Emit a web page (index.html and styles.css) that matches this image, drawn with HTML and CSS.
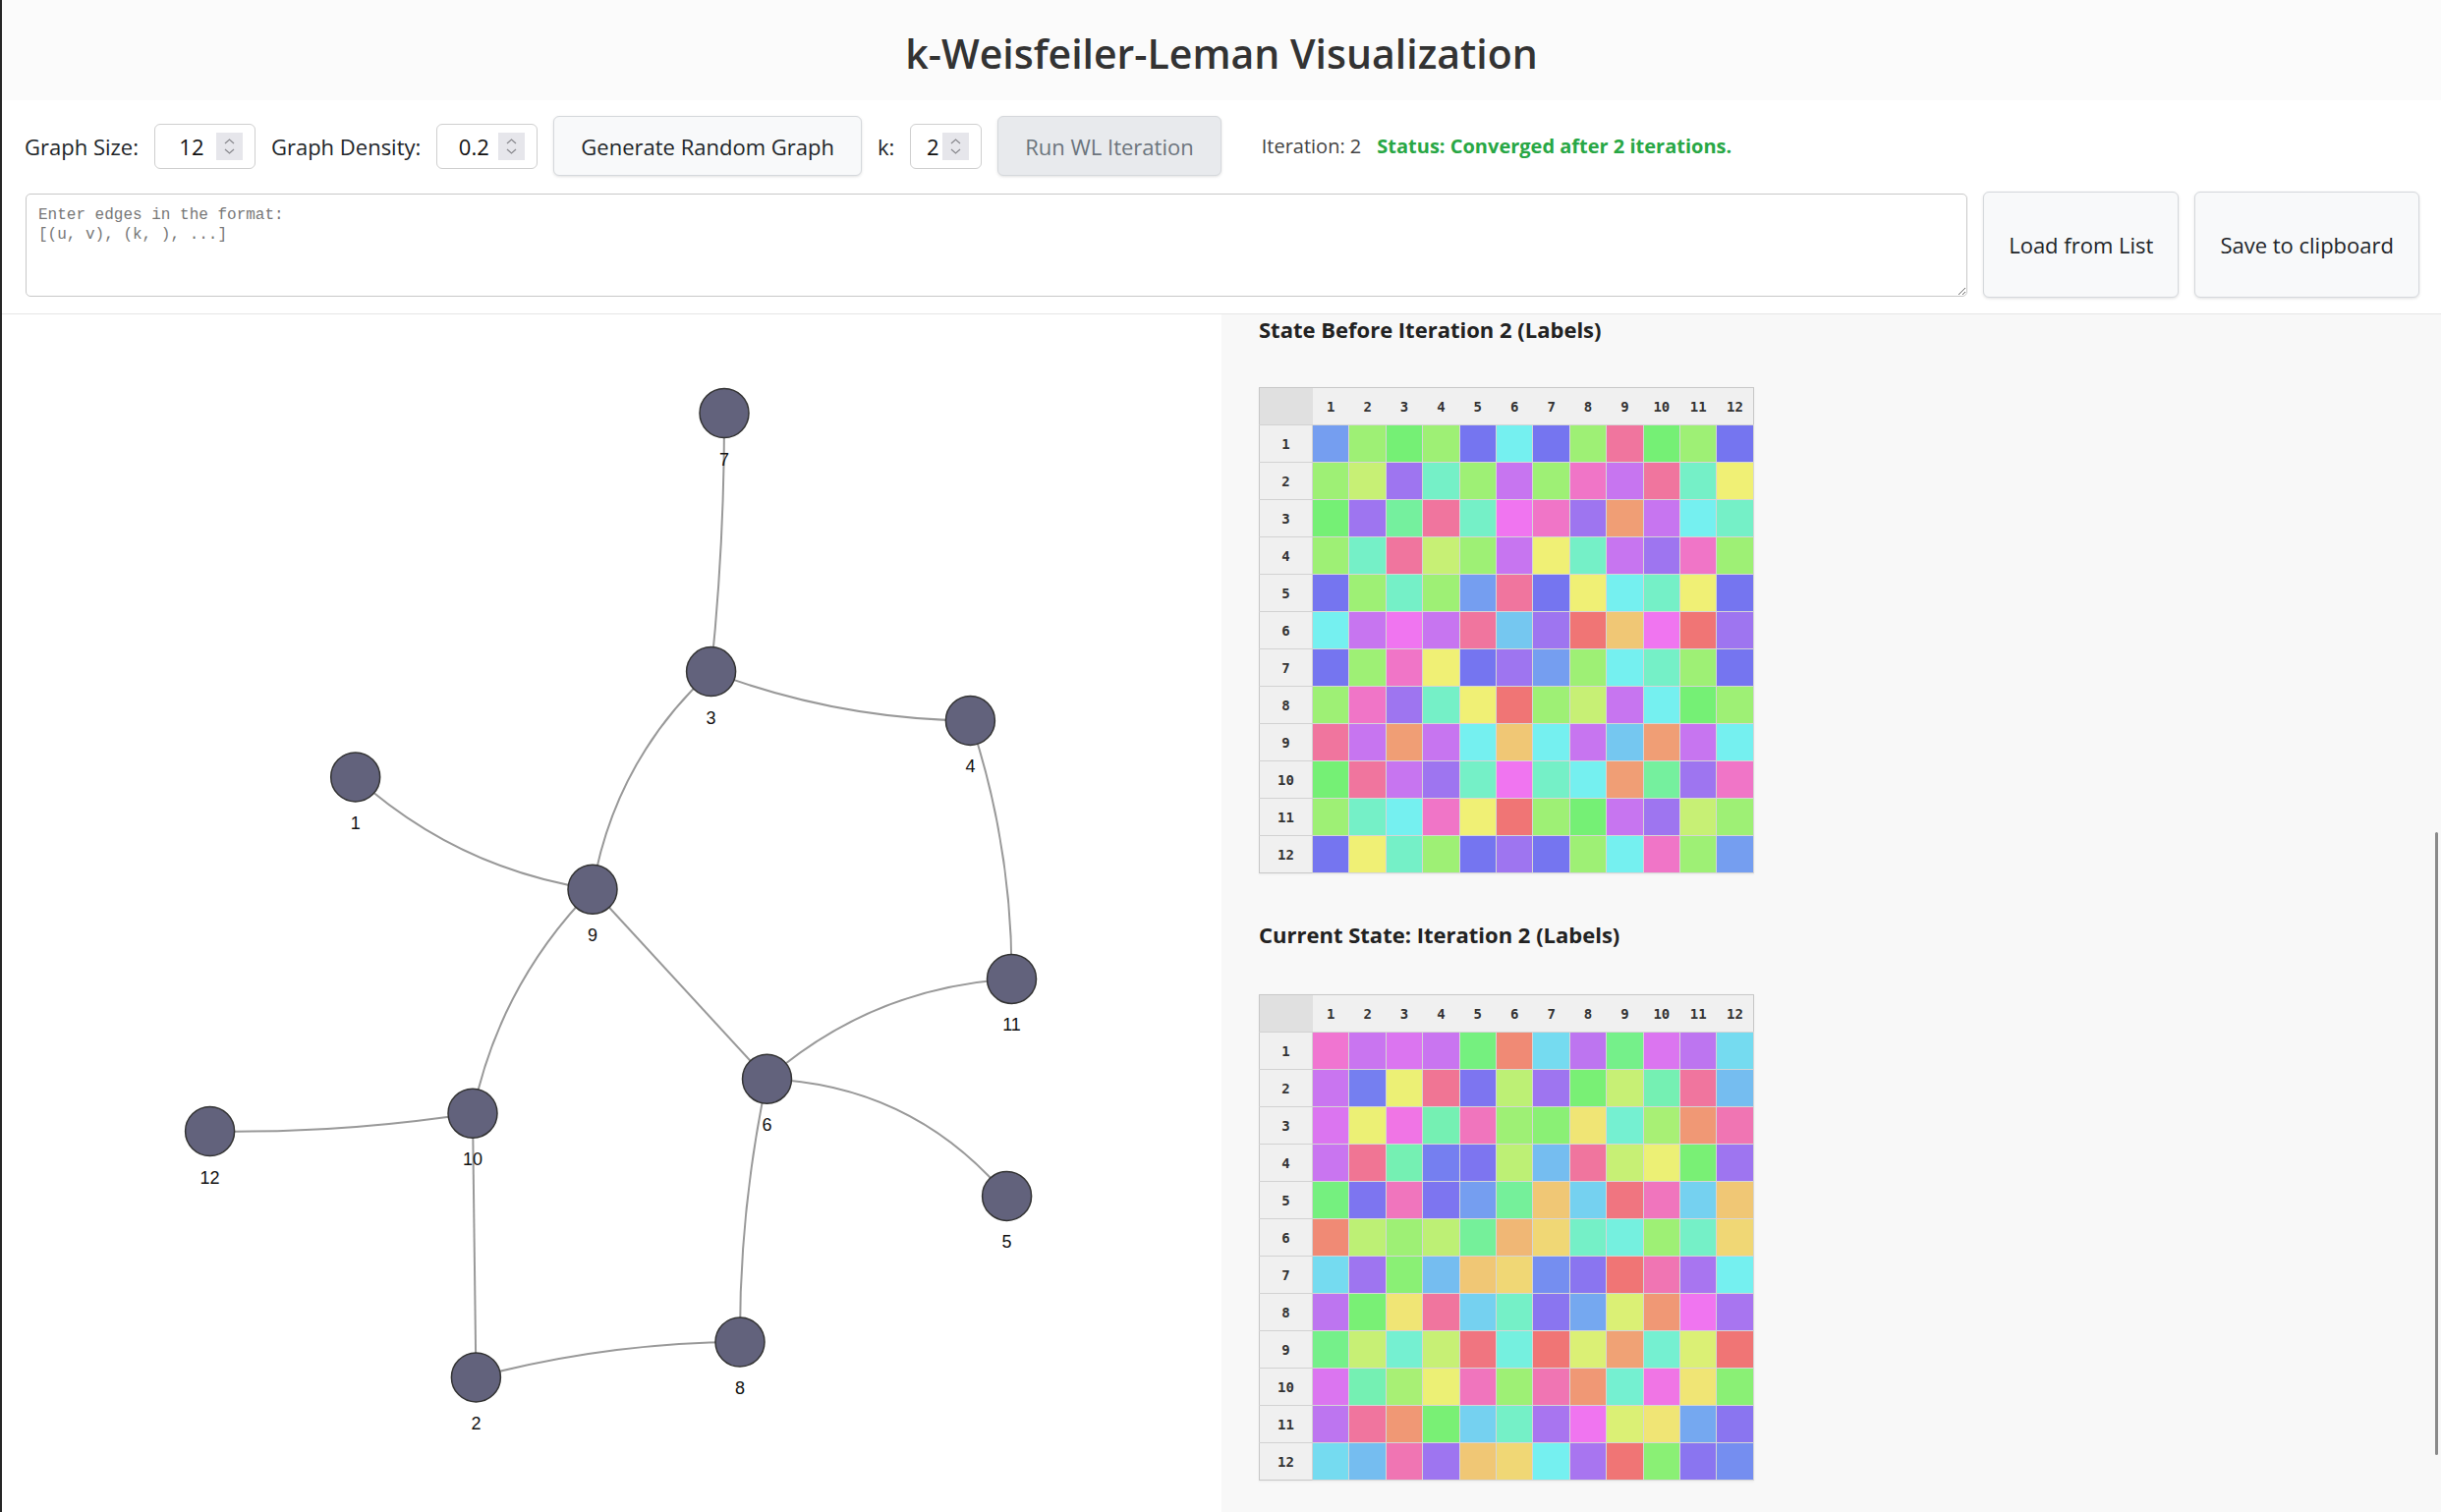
FILE: index.html
```html
<!DOCTYPE html>
<html lang="en">
<head>
<meta charset="utf-8">
<title>k-Weisfeiler-Leman Visualization</title>
<link rel="stylesheet" href="styles.css">
</head>
<body>
<header class="title-bar">
  <h1>k-Weisfeiler-Leman Visualization</h1>
</header>

<section class="controls">
  <div class="toolbar">
    <label class="field-label" for="size">Graph Size:</label>
    <div class="number-field wide">
      <input id="size" class="num-input" value="12">
      <span class="spinner"><svg width="27" height="28" viewBox="0 0 27 28"><polyline points="9,11 13.5,7 18,11"/><polyline points="9,17 13.5,21 18,17"/></svg></span>
    </div>
    <label class="field-label" for="density">Graph Density:</label>
    <div class="number-field wide">
      <input id="density" class="num-input" value="0.2">
      <span class="spinner"><svg width="27" height="28" viewBox="0 0 27 28"><polyline points="9,11 13.5,7 18,11"/><polyline points="9,17 13.5,21 18,17"/></svg></span>
    </div>
    <button class="btn">Generate Random Graph</button>
    <label class="field-label" for="k">k:</label>
    <div class="number-field narrow">
      <input id="k" class="num-input" value="2">
      <span class="spinner"><svg width="27" height="28" viewBox="0 0 27 28"><polyline points="9,11 13.5,7 18,11"/><polyline points="9,17 13.5,21 18,17"/></svg></span>
    </div>
    <button class="btn btn-disabled" disabled>Run WL Iteration</button>
    <div class="status">
      <span class="iter">Iteration: 2</span>
      <span class="converged">Status: Converged after 2 iterations.</span>
    </div>
  </div>
  <div class="edge-row">
    <textarea class="edge-input" placeholder="Enter edges in the format:&#10;[(u, v), (k, ), ...]"></textarea>
    <button class="btn btn-tall">Load from List</button>
    <button class="btn btn-tall">Save to clipboard</button>
  </div>
</section>

<main class="workspace">
  <div class="graph-panel">
    <svg class="graph" width="1241" height="1219" viewBox="0 0 1241 1219">
      <g class="edges">
        <path d="M735,100.5 Q735.3,232 721.6,363.6"/>
        <path d="M721.6,363.6 Q848.5,412 985.4,413.4"/>
        <path d="M721.6,363.6 Q623.5,453.9 601,585.2"/>
        <path d="M359.7,470.9 Q463.3,564.2 601,585.2"/>
        <path d="M601,585.2 Q506.5,681.3 479,813.2"/>
        <path d="M601,585.2 L778.5,778.2"/>
        <path d="M778.5,778.2 Q885.6,684.7 1027.5,676.4"/>
        <path d="M778.5,778.2 Q926.8,783.9 1022.6,897.4"/>
        <path d="M778.5,778.2 Q750.3,910.6 751,1046"/>
        <path d="M479,813.2 Q346,833.6 211.6,831.5"/>
        <path d="M479,813.2 L482.4,1081.9"/>
        <path d="M482.4,1081.9 Q614.4,1046.7 751,1046"/>
        <path d="M985.4,413.4 Q1028.2,541.4 1027.5,676.4"/>
      </g>
      <g class="nodes">
        <circle cx="359.7" cy="470.9" r="25"/>
        <circle cx="482.4" cy="1081.9" r="25"/>
        <circle cx="721.6" cy="363.6" r="25"/>
        <circle cx="985.4" cy="413.4" r="25"/>
        <circle cx="1022.6" cy="897.4" r="25"/>
        <circle cx="778.5" cy="778.2" r="25"/>
        <circle cx="735" cy="100.5" r="25"/>
        <circle cx="751" cy="1046" r="25"/>
        <circle cx="601" cy="585.2" r="25"/>
        <circle cx="479" cy="813.2" r="25"/>
        <circle cx="1027.5" cy="676.4" r="25"/>
        <circle cx="211.6" cy="831.5" r="25"/>
      </g>
      <g class="labels">
        <text x="359.7" y="523.9">1</text>
        <text x="482.4" y="1134.9">2</text>
        <text x="721.6" y="416.6">3</text>
        <text x="985.4" y="466.4">4</text>
        <text x="1022.6" y="950.4">5</text>
        <text x="778.5" y="831.2">6</text>
        <text x="735" y="153.5">7</text>
        <text x="751" y="1099">8</text>
        <text x="601" y="638.2">9</text>
        <text x="479" y="866.2">10</text>
        <text x="1027.5" y="729.4">11</text>
        <text x="211.6" y="884.5">12</text>
      </g>
    </svg>
  </div>

  <div class="state-panel">
    <h3>State Before Iteration 2 (Labels)</h3>
    <table class="state-table">
      <colgroup><col class="row-head-col"><col span="12"></colgroup>
      <thead>
        <tr><th class="corner"></th><th>1</th><th>2</th><th>3</th><th>4</th><th>5</th><th>6</th><th>7</th><th>8</th><th>9</th><th>10</th><th>11</th><th>12</th></tr>
      </thead>
      <tbody>
        <tr><th>1</th><td class="h220"></td><td class="h100"></td><td class="h120"></td><td class="h100"></td><td class="h240"></td><td class="h180"></td><td class="h240"></td><td class="h100"></td><td class="h340"></td><td class="h120"></td><td class="h100"></td><td class="h240"></td></tr>
        <tr><th>2</th><td class="h100"></td><td class="h80"></td><td class="h260"></td><td class="h160"></td><td class="h100"></td><td class="h280"></td><td class="h100"></td><td class="h320"></td><td class="h280"></td><td class="h340"></td><td class="h160"></td><td class="h60"></td></tr>
        <tr><th>3</th><td class="h120"></td><td class="h260"></td><td class="h140"></td><td class="h340"></td><td class="h160"></td><td class="h300"></td><td class="h320"></td><td class="h260"></td><td class="h20"></td><td class="h280"></td><td class="h180"></td><td class="h160"></td></tr>
        <tr><th>4</th><td class="h100"></td><td class="h160"></td><td class="h340"></td><td class="h80"></td><td class="h100"></td><td class="h280"></td><td class="h60"></td><td class="h160"></td><td class="h280"></td><td class="h260"></td><td class="h320"></td><td class="h100"></td></tr>
        <tr><th>5</th><td class="h240"></td><td class="h100"></td><td class="h160"></td><td class="h100"></td><td class="h220"></td><td class="h340"></td><td class="h240"></td><td class="h60"></td><td class="h180"></td><td class="h160"></td><td class="h60"></td><td class="h240"></td></tr>
        <tr><th>6</th><td class="h180"></td><td class="h280"></td><td class="h300"></td><td class="h280"></td><td class="h340"></td><td class="h200"></td><td class="h260"></td><td class="h0"></td><td class="h40"></td><td class="h300"></td><td class="h0"></td><td class="h260"></td></tr>
        <tr><th>7</th><td class="h240"></td><td class="h100"></td><td class="h320"></td><td class="h60"></td><td class="h240"></td><td class="h260"></td><td class="h220"></td><td class="h100"></td><td class="h180"></td><td class="h160"></td><td class="h100"></td><td class="h240"></td></tr>
        <tr><th>8</th><td class="h100"></td><td class="h320"></td><td class="h260"></td><td class="h160"></td><td class="h60"></td><td class="h0"></td><td class="h100"></td><td class="h80"></td><td class="h280"></td><td class="h180"></td><td class="h120"></td><td class="h100"></td></tr>
        <tr><th>9</th><td class="h340"></td><td class="h280"></td><td class="h20"></td><td class="h280"></td><td class="h180"></td><td class="h40"></td><td class="h180"></td><td class="h280"></td><td class="h200"></td><td class="h20"></td><td class="h280"></td><td class="h180"></td></tr>
        <tr><th>10</th><td class="h120"></td><td class="h340"></td><td class="h280"></td><td class="h260"></td><td class="h160"></td><td class="h300"></td><td class="h160"></td><td class="h180"></td><td class="h20"></td><td class="h140"></td><td class="h260"></td><td class="h320"></td></tr>
        <tr><th>11</th><td class="h100"></td><td class="h160"></td><td class="h180"></td><td class="h320"></td><td class="h60"></td><td class="h0"></td><td class="h100"></td><td class="h120"></td><td class="h280"></td><td class="h260"></td><td class="h80"></td><td class="h100"></td></tr>
        <tr><th>12</th><td class="h240"></td><td class="h60"></td><td class="h160"></td><td class="h100"></td><td class="h240"></td><td class="h260"></td><td class="h240"></td><td class="h100"></td><td class="h180"></td><td class="h320"></td><td class="h100"></td><td class="h220"></td></tr>
      </tbody>
    </table>

    <h3>Current State: Iteration 2 (Labels)</h3>
    <table class="state-table">
      <colgroup><col class="row-head-col"><col span="12"></colgroup>
      <thead>
        <tr><th class="corner"></th><th>1</th><th>2</th><th>3</th><th>4</th><th>5</th><th>6</th><th>7</th><th>8</th><th>9</th><th>10</th><th>11</th><th>12</th></tr>
      </thead>
      <tbody>
        <tr><th>1</th><td class="h315"></td><td class="h281"></td><td class="h290"></td><td class="h281"></td><td class="h125"></td><td class="h10"></td><td class="h190"></td><td class="h275"></td><td class="h130"></td><td class="h290"></td><td class="h275"></td><td class="h190"></td></tr>
        <tr><th>2</th><td class="h281"></td><td class="h235"></td><td class="h62"></td><td class="h345"></td><td class="h244"></td><td class="h85"></td><td class="h260"></td><td class="h118"></td><td class="h80"></td><td class="h150"></td><td class="h340"></td><td class="h205"></td></tr>
        <tr><th>3</th><td class="h290"></td><td class="h62"></td><td class="h305"></td><td class="h150"></td><td class="h325"></td><td class="h100"></td><td class="h110"></td><td class="h55"></td><td class="h165"></td><td class="h95"></td><td class="h17"></td><td class="h330"></td></tr>
        <tr><th>4</th><td class="h281"></td><td class="h345"></td><td class="h150"></td><td class="h235"></td><td class="h244"></td><td class="h85"></td><td class="h205"></td><td class="h340"></td><td class="h80"></td><td class="h62"></td><td class="h118"></td><td class="h260"></td></tr>
        <tr><th>5</th><td class="h125"></td><td class="h244"></td><td class="h325"></td><td class="h244"></td><td class="h220"></td><td class="h138"></td><td class="h40"></td><td class="h195"></td><td class="h355"></td><td class="h325"></td><td class="h195"></td><td class="h40"></td></tr>
        <tr><th>6</th><td class="h10"></td><td class="h85"></td><td class="h100"></td><td class="h85"></td><td class="h138"></td><td class="h32"></td><td class="h48"></td><td class="h160"></td><td class="h172"></td><td class="h100"></td><td class="h160"></td><td class="h48"></td></tr>
        <tr><th>7</th><td class="h190"></td><td class="h260"></td><td class="h110"></td><td class="h205"></td><td class="h40"></td><td class="h48"></td><td class="h228"></td><td class="h250"></td><td class="h0"></td><td class="h330"></td><td class="h265"></td><td class="h180"></td></tr>
        <tr><th>8</th><td class="h275"></td><td class="h118"></td><td class="h55"></td><td class="h340"></td><td class="h195"></td><td class="h160"></td><td class="h250"></td><td class="h215"></td><td class="h70"></td><td class="h17"></td><td class="h300"></td><td class="h265"></td></tr>
        <tr><th>9</th><td class="h130"></td><td class="h80"></td><td class="h165"></td><td class="h80"></td><td class="h355"></td><td class="h172"></td><td class="h0"></td><td class="h70"></td><td class="h22"></td><td class="h165"></td><td class="h70"></td><td class="h0"></td></tr>
        <tr><th>10</th><td class="h290"></td><td class="h150"></td><td class="h95"></td><td class="h62"></td><td class="h325"></td><td class="h100"></td><td class="h330"></td><td class="h17"></td><td class="h165"></td><td class="h305"></td><td class="h55"></td><td class="h110"></td></tr>
        <tr><th>11</th><td class="h275"></td><td class="h340"></td><td class="h17"></td><td class="h118"></td><td class="h195"></td><td class="h160"></td><td class="h265"></td><td class="h300"></td><td class="h70"></td><td class="h55"></td><td class="h215"></td><td class="h250"></td></tr>
        <tr><th>12</th><td class="h190"></td><td class="h205"></td><td class="h330"></td><td class="h260"></td><td class="h40"></td><td class="h48"></td><td class="h180"></td><td class="h265"></td><td class="h0"></td><td class="h110"></td><td class="h250"></td><td class="h228"></td></tr>
      </tbody>
    </table>
    <div class="scroll-thumb"></div>
  </div>
</main>
</body>
</html>
```

FILE: styles.css
```css
* { box-sizing: border-box; }

html, body {
  margin: 0;
  height: 100%;
}

body {
  font-family: "Open Sans", "Noto Sans", sans-serif;
  color: #212529;
  background: #fff;
  border-left: 2px solid #262626;
  display: flex;
  flex-direction: column;
  overflow: hidden;
}

/* ---------- title ---------- */
.title-bar {
  background: #fbfbfb;
  padding: 26px 0 20px;
  text-align: center;
}

.title-bar h1 {
  margin: 0;
  font-size: 41px;
  font-weight: 600;
  line-height: 56px;
  color: #333;
}

/* ---------- controls ---------- */
.controls {
  padding: 16px 22px 16px 23px;
  border-bottom: 1px solid #e6e6e6;
  display: flex;
  flex-direction: column;
  gap: 16px;
}

.toolbar {
  display: flex;
  align-items: center;
  gap: 16px;
  height: 61px;
  font-size: 22px;
}

.field-label {
  color: #212529;
  white-space: nowrap;
}

.number-field {
  height: 46px;
  display: flex;
  align-items: center;
  padding: 0 12px;
  border: 1px solid #cfcfcf;
  border-radius: 6px;
  background: #fff;
}

.number-field.wide { width: 103px; }
.number-field.narrow { width: 73px; }

.num-input {
  flex: 1;
  min-width: 0;
  border: none;
  outline: none;
  background: transparent;
  padding: 0;
  font-family: inherit;
  font-size: 22px;
  color: #111;
  text-align: center;
}

.spinner {
  width: 27px;
  height: 28px;
  flex: none;
  background: #e6e6eb;
  display: flex;
}

.spinner polyline {
  fill: none;
  stroke: #8a8a8f;
  stroke-width: 1.3;
}

.btn {
  height: 61px;
  padding: 0 27px;
  font-family: inherit;
  font-size: 22px;
  color: #212529;
  background: #f8f9fa;
  border: 1px solid #d5d8dc;
  border-radius: 6px;
  box-shadow: 0 1px 3px rgba(0, 0, 0, 0.12);
  white-space: nowrap;
  cursor: pointer;
}

.btn-disabled {
  background: #e8eaed;
  color: #6c757d;
  cursor: default;
}

.btn-tall {
  height: auto;
  padding: 0 25px;
}

.status {
  margin-left: 25px;
  display: flex;
  gap: 16px;
  font-size: 20px;
  white-space: nowrap;
}

.iter { color: #444; }

.converged {
  color: #28a745;
  font-weight: 700;
}

.edge-row {
  display: flex;
  gap: 16px;
  height: 108px;
}

.edge-input {
  flex: 1;
  margin: 2px 0 1px 1px;
  padding: 11px 12px;
  font-family: "Liberation Mono", "DejaVu Sans Mono", monospace;
  font-size: 16px;
  line-height: 20px;
  border: 1px solid #c8c8c8;
  border-radius: 5px;
  background: #fff;
  color: #333;
}

.edge-input::placeholder { color: #777; }

/* ---------- workspace ---------- */
.workspace {
  flex: 1;
  min-height: 0;
  display: grid;
  grid-template-columns: 1fr 1fr;
}

.graph-panel {
  background: #fff;
  overflow: hidden;
}

.graph { display: block; }

.edges path {
  fill: none;
  stroke: #999;
  stroke-width: 2;
}

.nodes circle {
  fill: #62627c;
  stroke: #333;
  stroke-width: 1.5;
}

.labels text {
  font-family: "Liberation Sans", Arial, sans-serif;
  font-size: 18px;
  fill: #111;
  text-anchor: middle;
}

.state-panel {
  position: relative;
  background: #f8f8f8;
  padding-left: 38px;
}

.state-panel h3 {
  margin: 47px 0 46px;
  font-size: 22px;
  font-weight: 700;
  line-height: 30px;
  color: #222;
}

.state-panel h3:first-child { margin: 0 0 44px; }

.state-table {
  border-collapse: collapse;
  table-layout: fixed;
  width: 504px;
  border: 1px solid #c8c8c8;
  box-shadow: 0 1px 2px rgba(0, 0, 0, 0.06);
}

.row-head-col { width: 54px; }

.state-table th {
  padding: 0;
  font-family: "DejaVu Sans Mono", "Liberation Mono", monospace;
  font-weight: 700;
  font-size: 14px;
  color: #333;
  background: #f0f0f0;
  text-align: center;
}

.state-table thead tr { height: 38px; }
.state-table tbody tr { height: 38px; }

.state-table th.corner { background: #e0e0e0; }

.state-table tbody th {
  border-top: 1px solid #d2d2d2;
  border-right: 1px solid #d2d2d2;
}

.state-table td {
  padding: 0;
  border: 1px solid #d6d6d6;
}

.scroll-thumb {
  position: absolute;
  right: 3px;
  top: 527px;
  width: 3px;
  height: 634px;
  background: #8a8a8a;
  border-radius: 2px;
}

/* ---------- label colours ---------- */
.h0   { background: hsl(0, 80%, 70%); }
.h10  { background: hsl(10, 80%, 70%); }
.h17  { background: hsl(17, 80%, 70%); }
.h20  { background: hsl(20, 80%, 70%); }
.h22  { background: hsl(22, 80%, 70%); }
.h32  { background: hsl(32, 80%, 70%); }
.h40  { background: hsl(40, 80%, 70%); }
.h48  { background: hsl(48, 80%, 70%); }
.h55  { background: hsl(55, 80%, 70%); }
.h60  { background: hsl(60, 80%, 70%); }
.h62  { background: hsl(62, 80%, 70%); }
.h70  { background: hsl(70, 80%, 70%); }
.h80  { background: hsl(80, 80%, 70%); }
.h85  { background: hsl(85, 80%, 70%); }
.h95  { background: hsl(95, 80%, 70%); }
.h100 { background: hsl(100, 80%, 70%); }
.h110 { background: hsl(110, 80%, 70%); }
.h118 { background: hsl(118, 80%, 70%); }
.h120 { background: hsl(120, 80%, 70%); }
.h125 { background: hsl(125, 80%, 70%); }
.h130 { background: hsl(130, 80%, 70%); }
.h138 { background: hsl(138, 80%, 70%); }
.h140 { background: hsl(140, 80%, 70%); }
.h150 { background: hsl(150, 80%, 70%); }
.h160 { background: hsl(160, 80%, 70%); }
.h165 { background: hsl(165, 80%, 70%); }
.h172 { background: hsl(172, 80%, 70%); }
.h180 { background: hsl(180, 80%, 70%); }
.h190 { background: hsl(190, 80%, 70%); }
.h195 { background: hsl(195, 80%, 70%); }
.h200 { background: hsl(200, 80%, 70%); }
.h205 { background: hsl(205, 80%, 70%); }
.h215 { background: hsl(215, 80%, 70%); }
.h220 { background: hsl(220, 80%, 70%); }
.h228 { background: hsl(228, 80%, 70%); }
.h235 { background: hsl(235, 80%, 70%); }
.h240 { background: hsl(240, 80%, 70%); }
.h244 { background: hsl(244, 80%, 70%); }
.h250 { background: hsl(250, 80%, 70%); }
.h260 { background: hsl(260, 80%, 70%); }
.h265 { background: hsl(265, 80%, 70%); }
.h275 { background: hsl(275, 80%, 70%); }
.h280 { background: hsl(280, 80%, 70%); }
.h281 { background: hsl(281, 80%, 70%); }
.h290 { background: hsl(290, 80%, 70%); }
.h300 { background: hsl(300, 80%, 70%); }
.h305 { background: hsl(305, 80%, 70%); }
.h315 { background: hsl(315, 80%, 70%); }
.h320 { background: hsl(320, 80%, 70%); }
.h325 { background: hsl(325, 80%, 70%); }
.h330 { background: hsl(330, 80%, 70%); }
.h340 { background: hsl(340, 80%, 70%); }
.h345 { background: hsl(345, 80%, 70%); }
.h355 { background: hsl(355, 80%, 70%); }
```
